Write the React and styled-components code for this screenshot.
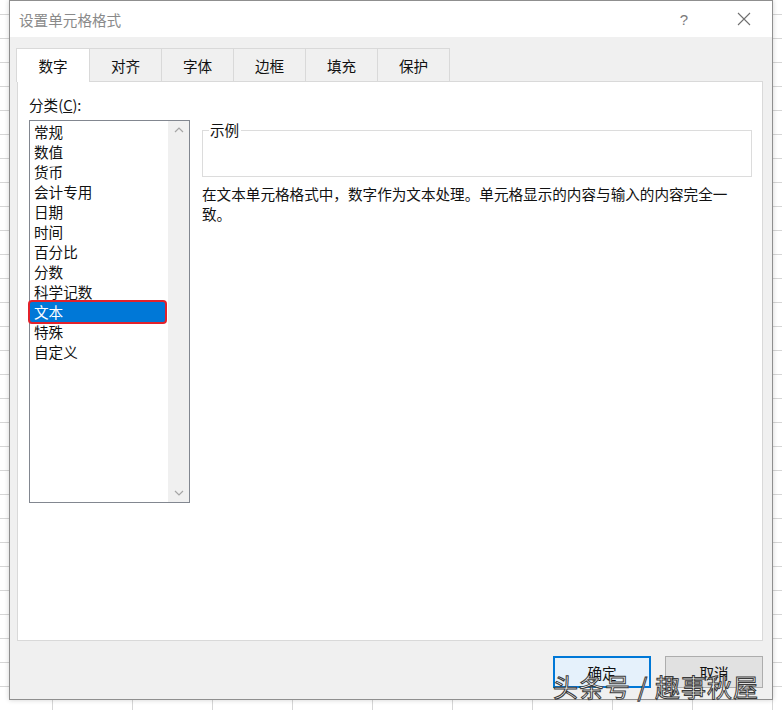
import React from "react";
import styled, { createGlobalStyle } from "styled-components";

const FONT = `"Noto Sans CJK SC", "Microsoft YaHei", sans-serif`;

const GlobalStyle = createGlobalStyle`
  html, body { margin: 0; padding: 0; }
  body {
    width: 782px;
    height: 710px;
    overflow: hidden;
    background-color: #ffffff;
    background-image:
      linear-gradient(to right, #d6d6d6 1px, transparent 1px),
      linear-gradient(to bottom, #d6d6d6 1px, transparent 1px);
    background-size: 80px 24px;
    background-position: 52px 14px;
    font-family: ${FONT};
  }
`;

const Page = styled.div`
  padding-left: 9px;
`;

const Dialog = styled.div`
  position: relative;
  width: 764px;
  height: 700px;
  box-sizing: border-box;
  border: 1px solid #8f8f8f;
  background: #f0f0f0;
  display: flex;
  flex-direction: column;
  box-shadow: 0 0 5px rgba(0, 0, 0, 0.18);
`;

const TitleBar = styled.div`
  height: 36px;
  flex: none;
  background: #ffffff;
  display: flex;
  align-items: center;
  padding-left: 9px;
`;

const Title = styled.div`
  flex: 1;
  font-size: 14.6px;
  color: #8a8a8a;
`;

const TitleButton = styled.div`
  width: 56px;
  height: 36px;
  display: flex;
  align-items: center;
  justify-content: center;
  color: #7a7a7a;
  font-size: 15px;
  font-family: "Liberation Sans", sans-serif;
`;

const HelpButton = styled(TitleButton)`
  padding-right: 4px;
`;

const Body = styled.div`
  flex: 1;
  display: flex;
  flex-direction: column;
  padding: 11px 9px 0 7px;
`;

const TabStrip = styled.div`
  display: flex;
  align-items: flex-start;
  height: 33px;
`;

const Tab = styled.div`
  position: relative;
  z-index: ${(p) => (p.$active ? 1 : 0)};
  box-sizing: border-box;
  width: ${(p) => (p.$active ? "74px" : "72px")};
  height: ${(p) => (p.$active ? "34px" : "33px")};
  margin-left: ${(p) => (p.$active ? "-1px" : "0")};
  border: 1px solid #d9d9d9;
  border-bottom: none;
  border-left: ${(p) => (p.$active ? "1px solid #d9d9d9" : "none")};
  background: ${(p) => (p.$active ? "#ffffff" : "#f0f0f0")};
  display: flex;
  align-items: center;
  justify-content: center;
  padding-bottom: ${(p) => (p.$active ? "1px" : "0")};
  font-size: 14.6px;
  color: #111;
`;

const Panel = styled.div`
  height: 560px;
  box-sizing: border-box;
  border: 1px solid #d9d9d9;
  background: #ffffff;
  padding: 13px 10px 0 11px;
  display: grid;
  grid-template-columns: 161px 1fr;
  grid-template-rows: 20px auto;
  column-gap: 12px;
  row-gap: 5px;
  align-content: start;
`;

const FieldLabel = styled.div`
  grid-column: 1 / -1;
  font-size: 14.6px;
  line-height: 20px;
  color: #111;
`;

const Key = styled.span`
  text-decoration: underline;
`;

const ListBox = styled.div`
  width: 161px;
  height: 383px;
  box-sizing: border-box;
  border: 1px solid #828790;
  display: flex;
`;

const Items = styled.div`
  flex: 1;
  padding: 1px 3px 0 0;
`;

const Item = styled.div`
  height: 20px;
  line-height: 20px;
  padding-left: 4px;
  font-size: 14.6px;
  color: ${(p) => (p.$selected ? "#ffffff" : "#111")};
  background: ${(p) => (p.$selected ? "#0078d7" : "transparent")};
  box-shadow: ${(p) => (p.$selected ? "0 0 0 2px #e3212b" : "none")};
  border-radius: ${(p) => (p.$selected ? "2px" : "0")};
  position: relative;
`;

const ScrollBar = styled.div`
  width: 21px;
  background: #f0f0f0;
  display: flex;
  flex-direction: column;
  justify-content: space-between;
  align-items: center;
  padding: 6px 0 6px;
`;

const Right = styled.div`
  display: flex;
  flex-direction: column;
`;

const Group = styled.fieldset`
  margin: 0;
  padding: 0;
  min-width: 0;
  border: 1px solid #dcdcdc;
`;

const Legend = styled.legend`
  margin-left: 6px;
  padding: 0 2px 0 1px;
  font-size: 14.6px;
  line-height: 20px;
  color: #111;
`;

const Sample = styled.div`
  height: 36px;
`;

const Description = styled.p`
  margin: 7px 0 0;
  width: 549px;
  font-size: 14.6px;
  line-height: 20px;
  color: #111;
`;

const Footer = styled.div`
  height: 58px;
  box-sizing: border-box;
  display: flex;
  justify-content: flex-end;
  align-items: flex-start;
  gap: 14px;
  padding-top: 15px;
`;

const Button = styled.div`
  width: 98px;
  height: 32px;
  box-sizing: border-box;
  border: ${(p) => (p.$primary ? "2px solid #0078d7" : "1px solid #adadad")};
  background: ${(p) => (p.$primary ? "#e5f1fb" : "#e1e1e1")};
  display: flex;
  align-items: center;
  justify-content: center;
  font-size: 14.6px;
  color: #111;
`;

const Watermark = styled.div`
  position: absolute;
  left: 543px;
  top: 670px;
  font-size: 25px;
  line-height: 30px;
  letter-spacing: 1px;
  color: #ffffff;
  -webkit-text-stroke: 1px #3a3a3a;
  white-space: pre;
  pointer-events: none;
`;

const Chevron = ({ up }) => (
  <svg width="10" height="6" viewBox="0 0 10 6">
    <path
      d={up ? "M1 5 L5 1 L9 5" : "M1 1 L5 5 L9 1"}
      fill="none"
      stroke="#a6a6a6"
      strokeWidth="1.2"
    />
  </svg>
);

const CloseIcon = () => (
  <svg width="14" height="14" viewBox="0 0 14 14">
    <path d="M1 1 L13 13 M13 1 L1 13" stroke="#6f6f6f" strokeWidth="1.1" fill="none" />
  </svg>
);

const categories = [
  "常规",
  "数值",
  "货币",
  "会计专用",
  "日期",
  "时间",
  "百分比",
  "分数",
  "科学记数",
  "文本",
  "特殊",
  "自定义",
];

const tabs = ["数字", "对齐", "字体", "边框", "填充", "保护"];

export default function App() {
  return (
    <>
      <GlobalStyle />
      <Page>
        <Dialog>
          <TitleBar>
            <Title>设置单元格格式</Title>
            <HelpButton>?</HelpButton>
            <TitleButton>
              <CloseIcon />
            </TitleButton>
          </TitleBar>
          <Body>
            <TabStrip>
              {tabs.map((t, i) => (
                <Tab key={t} $active={i === 0}>
                  {t}
                </Tab>
              ))}
            </TabStrip>
            <Panel>
              <FieldLabel>
                分类(<Key>C</Key>):
              </FieldLabel>
              <ListBox>
                <Items>
                  {categories.map((c) => (
                    <Item key={c} $selected={c === "文本"}>
                      {c}
                    </Item>
                  ))}
                </Items>
                <ScrollBar>
                  <Chevron up />
                  <Chevron />
                </ScrollBar>
              </ListBox>
              <Right>
                <Group>
                  <Legend>示例</Legend>
                  <Sample />
                </Group>
                <Description>
                  在文本单元格格式中，数字作为文本处理。单元格显示的内容与输入的内容完全一致。
                </Description>
              </Right>
            </Panel>
            <Footer>
              <Button $primary>确定</Button>
              <Button>取消</Button>
            </Footer>
          </Body>
          <Watermark>头条号 / 趣事秋屋</Watermark>
        </Dialog>
      </Page>
    </>
  );
}
